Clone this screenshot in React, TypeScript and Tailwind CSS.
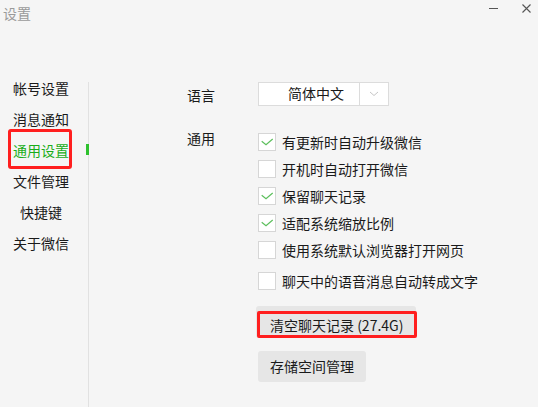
import React from 'react';

const menu = ['帐号设置', '消息通知', '通用设置', '文件管理', '快捷键', '关于微信'];

const options = [
  { label: '有更新时自动升级微信', checked: true },
  { label: '开机时自动打开微信', checked: false },
  { label: '保留聊天记录', checked: true },
  { label: '适配系统缩放比例', checked: true },
  { label: '使用系统默认浏览器打开网页', checked: false },
  { label: '聊天中的语音消息自动转成文字', checked: false },
];

const CheckBox = ({ checked }: { checked: boolean }) => (
  <div className="w-[18px] h-[18px] shrink-0 border border-[#d6d6d6] bg-white flex items-center justify-center">
    {checked && (
      <svg width="18" height="18" viewBox="0 0 18 18" className="-m-px">
        <path d="M3.7 8.3 L8 11.7 L14.7 6" fill="none" stroke="#5cbf5c" strokeWidth="1.2" />
      </svg>
    )}
  </div>
);

export default function App() {
  return (
    <div
      className="w-[538px] h-[407px] bg-[#f5f5f5] flex flex-col text-[14px] text-[#1a1a1a] overflow-hidden"
      style={{ fontFamily: '"Noto Sans CJK SC", "Noto Sans", sans-serif' }}
    >
      {/* title bar */}
      <div className="h-[28px] flex items-start shrink-0">
        <div className="pl-[3px] pt-[3px] leading-[20px] text-[#9a9a9a]">设置</div>
        <div className="ml-auto flex items-start">
          <div className="w-[9px] h-px bg-[#555] mt-[8px]" />
          <svg width="9" height="9" viewBox="0 0 9 9" className="ml-[24px] mr-[7px] mt-[4px]">
            <path d="M0.5 0.5 L8.5 8.5 M8.5 0.5 L0.5 8.5" stroke="#555" strokeWidth="1.1" />
          </svg>
        </div>
      </div>

      <div className="flex flex-1">
        {/* sidebar */}
        <div className="w-[88px] pt-[44px] flex flex-col">
          {menu.map((m) => {
            const active = m === '通用设置';
            return (
              <div key={m} className="relative h-[31px] flex items-center">
                <div className={`w-[82px] text-center leading-[20px] ${active ? 'text-[#1aad19]' : ''}`}>{m}</div>
                {active && (
                  <>
                    <div className="absolute left-[8px] top-[-5px] w-[64px] h-[40px] border-[3px] border-[#ff1f1f] rounded-[3px]" />
                    <div className="absolute right-[-1px] top-[10px] w-[3px] h-[11px] bg-[#2ec12e]" />
                  </>
                )}
              </div>
            );
          })}
        </div>
        <div className="w-px bg-[#e1e1e1] mt-[54px]" />

        {/* content */}
        <div className="flex-1 pl-[98px] pt-[54px]">
          <div className="flex items-center">
            <div className="w-[71px] leading-[20px] mt-[1px]">语言</div>
            <div className="w-[131px] h-[24px] bg-white border border-[#dcdcdc] flex">
              <div className="w-[100px] pl-[29px] leading-[21px]">简体中文</div>
              <div className="w-px bg-[#dcdcdc]" />
              <div className="flex-1 flex items-center justify-center">
                <svg width="10" height="6" viewBox="0 0 10 6">
                  <path d="M1 1 L5 4.5 L9 1" fill="none" stroke="#c6c6c6" strokeWidth="1" />
                </svg>
              </div>
            </div>
          </div>

          <div className="flex mt-[22px]">
            <div className="w-[71px] leading-[20px]">通用</div>
            <div className="flex flex-col">
              {options.map((o, i) => (
                <div key={o.label} className={`h-[27px] flex items-center ${i === 5 ? 'mt-[4px]' : ''}`}>
                  <CheckBox checked={o.checked} />
                  <span className="ml-[6px] leading-[20px] whitespace-nowrap">{o.label}</span>
                </div>
              ))}

              <button className="relative mt-[12px] -ml-[2px] w-[160px] h-[32px] bg-[#e6e6e6] rounded-[3px] pt-[6px] pl-[14px] flex items-center whitespace-nowrap">
                清空聊天记录 (27.4G)
                <span className="absolute left-[1px] right-[-1px] top-[5px] bottom-0 border-[3px] border-[#ff1f1f] rounded-[2px]" />
              </button>

              <button className="mt-[13px] w-[108px] h-[31px] bg-[#e6e6e6] rounded-[3px] flex items-center justify-center whitespace-nowrap">
                存储空间管理
              </button>
            </div>
          </div>
        </div>
      </div>
    </div>
  );
}
